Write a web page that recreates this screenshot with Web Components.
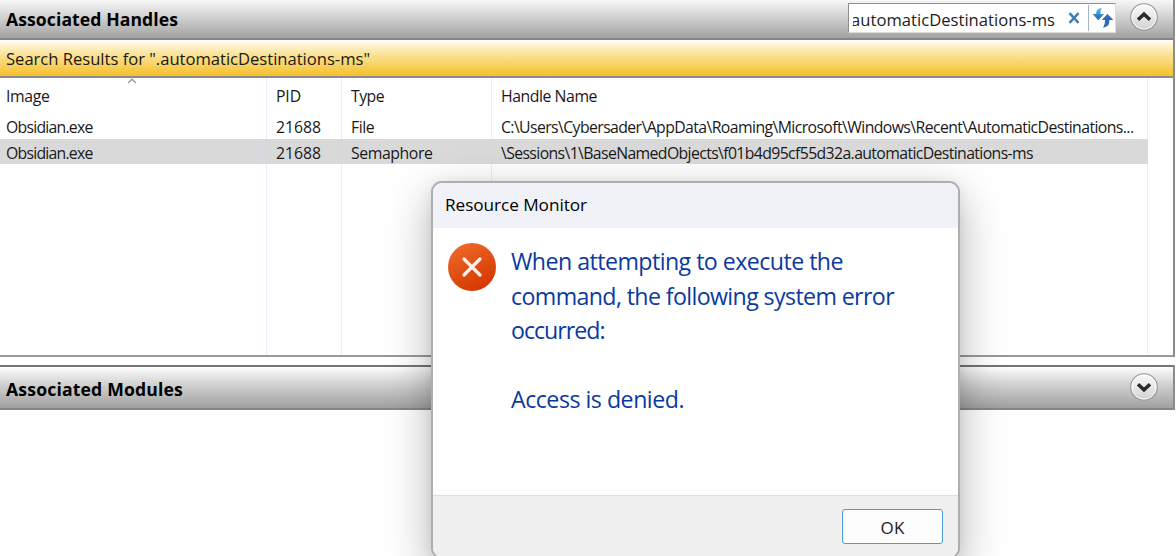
<!DOCTYPE html>
<html lang="en">
<head>
<meta charset="utf-8">
<title>Resource Monitor</title>
<style>
html,body{margin:0;height:100%;overflow:hidden;background:#fff}
body{font:15.8px/20px "Open Sans","Noto Sans",sans-serif;color:#191919}
</style>
</head>
<body>
<resource-page></resource-page>
<script>
const define=(name,html,init)=>customElements.define(name,class extends HTMLElement{
  connectedCallback(){
    if(this.shadowRoot)return;
    this.attachShadow({mode:'open'}).innerHTML=html;
    if(init)init(this,this.shadowRoot);
  }
});

/* A single line of text tracked so that it fills the given width. */
define('fit-text',`<style>:host{display:inline-block;white-space:pre;vertical-align:top}span{display:inline-block;white-space:pre}</style><span></span>`,(el,root)=>{
  const s=root.querySelector('span');
  s.textContent=el.getAttribute('text');
  const w=+el.getAttribute('w'),n=s.textContent.length;
  s.style.letterSpacing=((w-s.getBoundingClientRect().width)/n).toFixed(3)+'px';
});

define('round-toggle',`<style>:host{display:block;width:28px;height:28px}:host([down]) .c{transform:rotate(180deg);transform-origin:14px 14px}svg{display:block}</style>
<svg width="28" height="28" viewBox="0 0 28 28"><defs><linearGradient id="g" x1="0" y1="0" x2="0" y2="1"><stop offset="0" stop-color="#fafafa"/><stop offset=".5" stop-color="#e8e8e8"/><stop offset="1" stop-color="#cfcfcf"/></linearGradient></defs>
<circle cx="14" cy="14" r="13.3" fill="url(#g)" stroke="#979797" stroke-width="1.1"/><circle cx="14" cy="14" r="12" fill="none" stroke="#fff" stroke-opacity=".75"/>
<path class="c" d="M8 16.8 14 11.2l6 5.6" fill="none" stroke="#2b2b2b" stroke-width="3.4"/></svg>`);

define('search-box',`<style>:host{display:flex;box-sizing:border-box;width:268px;height:30px;background:#fff;border:1px solid #8f8f8f;border-right-color:#ddd;border-bottom-color:#ddd;align-items:center}
.field{width:202px;margin-left:4px;height:24px;padding-top:3px;box-sizing:border-box;overflow:hidden;display:flex;justify-content:flex-end;font-size:16.6px;line-height:22px;color:#1c1c1c}
.x{margin-left:13px}.sep{width:1px;height:26px;background:#a8b3be;margin-left:8px}.r{margin-left:3px}svg{display:block;flex:none}</style>
<div class="field"><fit-text text="automaticDestinations-ms" w="204"></fit-text></div>
<svg class="x" width="12" height="12" viewBox="0 0 12 12"><path d="M1.5 1.2 10.5 10.8M10.5 1.2 1.5 10.8" stroke="#437fb5" stroke-width="2.6"/></svg>
<i class="sep"></i>
<svg class="r" width="22" height="22" viewBox="0 0 22 22"><defs><linearGradient id="a" x1="0" y1="0" x2="0" y2="1"><stop offset="0" stop-color="#62d3ea"/><stop offset=".6" stop-color="#3480c4"/><stop offset="1" stop-color="#2464b8"/></linearGradient></defs>
<path d="M9.8 1C6 1 4.2 3 4.2 7H0.4L6.3 13.2 12 7H8.4C8.4 4.4 8.8 3 9.8 1z" fill="url(#a)"/><path d="M11 20.4c4.6-.3 6.4-2.4 6.4-7.4h4L15.4 7 9.8 13h3.2c0 3.6-.6 5-2 7.4z" fill="#2f69bb"/></svg>`);

define('section-bar',`<style>:host{display:flex;box-sizing:border-box;height:40px;align-items:center;justify-content:space-between;padding:0 15px 5px 6px;border-bottom:2px solid #868686;background:linear-gradient(#f7f7f7,#dadada 35%,#a2a2a2);font-weight:700;font-size:17.6px;color:#000}
:host([closed]){height:45px;border-top:2px solid #747474;background:linear-gradient(#fdfdfd,#cfcfcf 45%,#a0a0a0);padding-bottom:0}
:host([closed]) .r{margin-top:-1px}
slot[name=title]{display:block;margin-top:5px}:host([closed]) slot[name=title]{margin-top:3px}
.r{display:flex;gap:14px;font-weight:400;align-items:center}::slotted(search-box){margin-top:2px}</style><slot name="title"></slot><div class="r"><slot></slot></div>`);

define('result-banner',`<style>:host{display:flex;box-sizing:border-box;height:38px;align-items:center;padding:2px 6px 0;border-bottom:2px solid #8c8c8c;background:linear-gradient(#fffefa,#fbe5a0 35%,#f5c02a);font-size:16.6px}</style><slot></slot>`);

define('handle-row',`<style>:host{display:grid;grid-template-columns:266px 75px 150px 656px;width:1148px;height:25px;line-height:27px}
:host([header]){height:36px;line-height:37px}:host([selected]){background:linear-gradient(90deg,transparent 266px,#cfd8e2 266px 267px,transparent 267px 341px,#cfd8e2 341px 342px,transparent 342px) #d9d9d9;line-height:28px}
::slotted(*){box-sizing:border-box;padding-left:6px;height:100%;white-space:nowrap}::slotted(:not(:first-child)){padding-left:10px}</style><slot></slot>`);

define('handle-table',`<style>:host{display:block;box-sizing:border-box;height:279px;background:linear-gradient(90deg,transparent 266px,#e6eef7 266px 267px,transparent 267px 341px,#e6eef7 341px 342px,transparent 342px 491px,#e6eef7 491px 492px,transparent 492px 1147px,#e9eff6 1147px 1148px,transparent 1148px) #fff;border-bottom:2px solid #999;position:relative}
svg{position:absolute;left:127px;top:0}</style><svg width="10" height="6" viewBox="0 0 10 6"><path d="M1 5 5 1.2 9 5" fill="none" stroke="#999" stroke-width="1.2"/></svg><slot></slot>`);

define('error-dialog',`<style>:host{position:absolute;left:431px;top:181px;width:529px;height:378px;box-sizing:border-box;border:2px solid #aeaeae;border-radius:11px;background:#fff;display:flex;flex-direction:column;overflow:hidden;box-shadow:0 16px 44px 2px rgba(0,0,0,.28),0 0 12px rgba(0,0,0,.06)}
header{height:45px;flex:none;background:#f1f2f7;padding-left:12px;line-height:44px;font-size:17.2px;color:#000}
main{flex:1;display:flex;padding:15px 14px 0 15px;gap:15px}.m{font-size:23.2px;line-height:34.5px;color:#0b3a9e;padding-top:1px}.m div{height:34.5px}svg{flex:none}
footer{flex:none;height:62px;box-sizing:border-box;border-top:1px solid #dfdfdf;background:#f0f0f0;display:flex;justify-content:flex-end;padding:13px 15px 0}
button{font:inherit;font-size:17px;line-height:34px;width:101px;height:35px;border:1px solid #4a9bd8;border-radius:3px;background:#fdfdfd;color:#191919;padding:1px 0 0}</style>
<header><fit-text text="Resource Monitor" w="142"></fit-text></header>
<main><svg width="48" height="48" viewBox="0 0 48 48"><defs><linearGradient id="e" x1=".2" y1="0" x2=".7" y2="1"><stop offset="0" stop-color="#ee6a2b"/><stop offset="1" stop-color="#d43600"/></linearGradient></defs><circle cx="24" cy="24" r="24" fill="url(#e)"/><path d="M16 16 32 32M32 16 16 32" stroke="#fbeee8" stroke-width="3.2" stroke-linecap="round"/></svg>
<div class="m"><div><fit-text text="When attempting to execute the" w="332"></fit-text></div><div><fit-text text="command, the following system error" w="383"></fit-text></div><div><fit-text text="occurred:" w="93.5"></fit-text></div><div></div><div><fit-text text="Access is denied." w="173"></fit-text></div></div></main>
<footer><button><fit-text text="OK" w="24"></fit-text></button></footer>`);

define('resource-page',`<style>:host{display:block;position:relative;width:1176px;height:556px;overflow:hidden;background:#fff}
.panel{box-sizing:border-box;width:1175px;border-right:2px solid #8c8c8c}.second{margin-top:8px}</style>
<div class="panel"><section-bar><fit-text slot="title" text="Associated Handles" w="172"></fit-text><search-box></search-box><round-toggle></round-toggle></section-bar>
<result-banner><fit-text text='Search Results for ".automaticDestinations-ms"' w="364"></fit-text></result-banner>
<handle-table>
<handle-row header><div><fit-text text="Image" w="43.5"></fit-text></div><div><fit-text text="PID" w="25"></fit-text></div><div><fit-text text="Type" w="33"></fit-text></div><div><fit-text text="Handle Name" w="96"></fit-text></div></handle-row>
<handle-row><div><fit-text text="Obsidian.exe" w="86.5"></fit-text></div><div><fit-text text="21688" w="45"></fit-text></div><div><fit-text text="File" w="23"></fit-text></div><div><fit-text text="C:\\Users\\Cybersader\\AppData\\Roaming\\Microsoft\\Windows\\Recent\\AutomaticDestinations..." w="632.5"></fit-text></div></handle-row>
<handle-row selected><div><fit-text text="Obsidian.exe" w="86.5"></fit-text></div><div><fit-text text="21688" w="45"></fit-text></div><div><fit-text text="Semaphore" w="81.5"></fit-text></div><div><fit-text text="\\Sessions\\1\\BaseNamedObjects\\f01b4d95cf55d32a.automaticDestinations-ms" w="532"></fit-text></div></handle-row>
</handle-table></div>
<div class="panel second"><section-bar closed><fit-text slot="title" text="Associated Modules" w="177"></fit-text><round-toggle down></round-toggle></section-bar></div>
<error-dialog></error-dialog>`);
</script>
</body>
</html>
